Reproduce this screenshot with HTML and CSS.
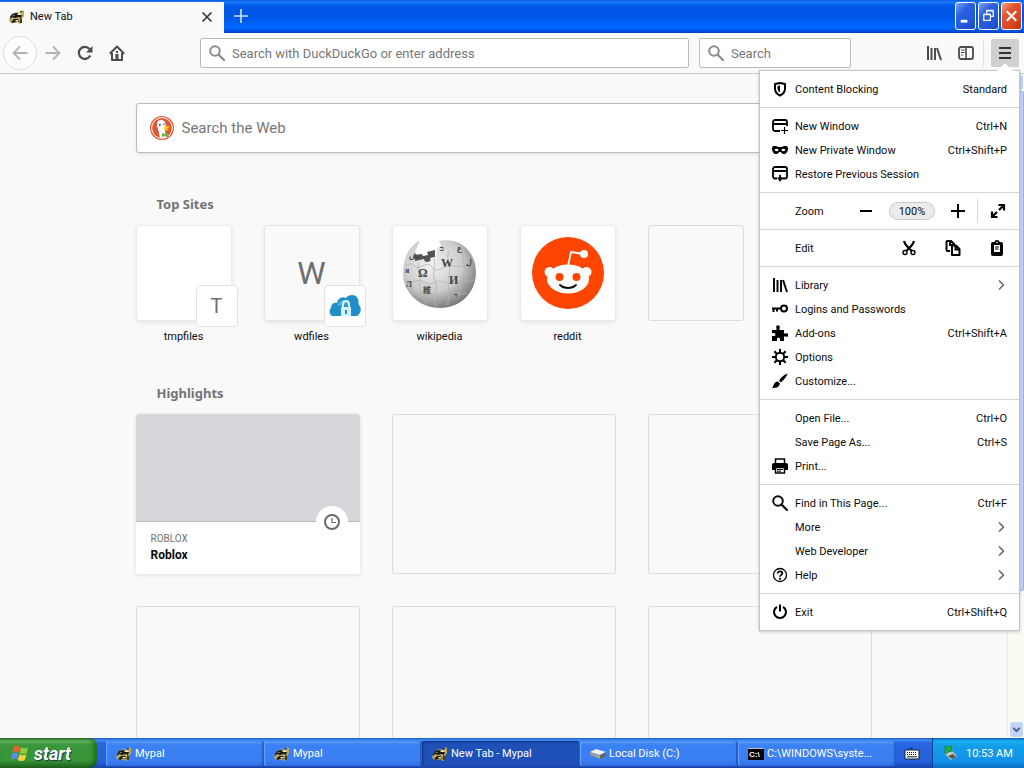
FILE: index.html
```
<!DOCTYPE html>
<html lang="en">
<head>
    <meta charset="UTF-8">
    <meta name="viewport" content="width=device-width, initial-scale=1.0">
    <title>New Tab - Mypal</title>
    <link rel="stylesheet" href="styles.css">
</head>
<body>
    <svg class="sprite" aria-hidden="true">
        <symbol id="mypal" viewBox="0 0 16 16">
            <path d="M1 9l1-3 3-2 3-1 3 1 2-3 2 1 0 5-2 3 0 4-3 1-1-2-3 1-3 0-2-1-1-2z" fill="#b8a95c"/>
            <path d="M1 8l2-3 4-1 3 1 3 1-1 3-2-1-4 1-3-1-2 2zM5 10l4 0 2 3-3-1-4 2-2-1zM11 2l2 0-1 2z" fill="#1c1a12"/>
            <path d="M8 6l2-2 3 1-1 1zM3 7l3-1-1 1zM6 11l3 0 1 1-3 0z" fill="#f5eccb"/>
            <path d="M11 9l2 1 0 4-2 0z" fill="#443d1c"/>
        </symbol>
        <symbol id="chevron" viewBox="0 0 16 16">
            <path d="M8 3.500l4.500 4.500L8 12.500" fill="none" stroke="#666" stroke-width="1.500"/>
        </symbol>
        <symbol id="glass" viewBox="0 0 16 16">
            <circle cx="6" cy="6" r="4.800" fill="none" stroke="currentColor" stroke-width="2"/>
            <path d="M9.500 9.500l5.500 5.500" stroke="currentColor" stroke-width="2.200" stroke-linecap="round"/>
        </symbol>
        <symbol id="library" viewBox="0 0 16 16">
            <path d="M2 1v14M5.500 3v12M9 3v12M11 3l4 12" fill="none" stroke="currentColor" stroke-width="2"/>
        </symbol>
    </svg>

    <header class="titlebar">
        <div class="tab">
            <svg class="icon"><use href="#mypal"/></svg>
            <span class="tab-title">New Tab</span>
            <button class="tab-close" aria-label="Close tab">
                <svg class="icon" viewBox="0 0 16 16"><path d="M3.500 3.500l9 9M12.500 3.500l-9 9" stroke="#333" stroke-width="1.600"/></svg>
            </button>
        </div>
        <button class="new-tab" aria-label="Open a new tab">
            <svg class="icon" viewBox="0 0 16 16"><path d="M8 1v14M1 8h14" stroke="#cfe4ff" stroke-width="1.600"/></svg>
        </button>
        <div class="window-buttons">
            <button class="win-btn" aria-label="Minimize"><svg viewBox="0 0 20 26"><path d="M5 18.500h7" stroke="#fff" stroke-width="3"/></svg></button>
            <button class="win-btn" aria-label="Restore"><svg viewBox="0 0 20 26"><path d="M5 11.500h7v6H5zM5 11h7M8 10V7.500h7v6h-3M8 7h7" fill="none" stroke="#fff" stroke-width="1.300"/></svg></button>
            <button class="win-btn win-close" aria-label="Close"><svg viewBox="0 0 20 26"><path d="M5 8l10 10M15 8L5 18" stroke="#fff" stroke-width="2.200"/></svg></button>
        </div>
    </header>

    <nav class="toolbar">
        <button class="tool back" aria-label="Back">
            <svg class="icon" viewBox="0 0 16 16"><path d="M15.500 8H1.500M8 1.500L1.500 8 8 14.500" fill="none" stroke="#b4b4b4" stroke-width="1.800"/></svg>
        </button>
        <button class="tool" aria-label="Forward">
            <svg class="icon" viewBox="0 0 16 16"><path d="M.5 8h14M8 1.500L14.500 8 8 14.500" fill="none" stroke="#b4b4b4" stroke-width="1.800"/></svg>
        </button>
        <button class="tool" aria-label="Reload">
            <svg class="icon" viewBox="0 0 16 16"><path d="M13.300 10.500A6 6 0 1 1 12.500 4" fill="none" stroke="#4a4a4f" stroke-width="2.200"/><path d="M15.500 1v6.500H9z" fill="#4a4a4f"/></svg>
        </button>
        <button class="tool" aria-label="Home">
            <svg class="icon" viewBox="0 0 16 16"><path d="M.8 8.700L8 1.500l7.200 7.200M3 8v7h10V8" fill="none" stroke="#4a4a4f" stroke-width="2" stroke-linejoin="round"/><path d="M6.500 9h3v6h-3z" fill="#4a4a4f"/><path d="M7 6h2v2H7z" fill="#4a4a4f"/></svg>
        </button>
        <div class="spacer"></div>
        <label class="field url">
            <svg class="icon"><use href="#glass"/></svg>
            <input type="text" aria-label="Address" placeholder="Search with DuckDuckGo or enter address">
        </label>
        <label class="field search">
            <svg class="icon"><use href="#glass"/></svg>
            <input type="text" aria-label="Search" placeholder="Search">
        </label>
        <div class="spacer"></div>
        <button class="tool" aria-label="Library"><svg class="icon"><use href="#library"/></svg></button>
        <button class="tool" aria-label="Sidebars">
            <svg class="icon" viewBox="0 0 16 16"><rect x="1" y="2" width="14" height="12" rx="2" fill="none" stroke="#4a4a4f" stroke-width="1.800"/><path d="M8 2v12" stroke="#4a4a4f" stroke-width="1.600"/><path d="M3 5h3.500M3 7.500h3.500M3 10h2" stroke="#4a4a4f"/></svg>
        </button>
        <div class="menu-holder">
            <button class="tool menu-button" aria-label="Open menu">
                <svg class="icon" viewBox="0 0 16 16"><path d="M2 3h12M2 8h12M2 13h12" stroke="#333" stroke-width="2"/></svg>
            </button>
        </div>
    </nav>

    <div class="viewport">
        <main class="page">
            <label class="web-search">
                <svg class="duck" viewBox="0 0 24 24"><circle cx="12" cy="12" r="12" fill="#de5833"/><circle cx="12" cy="12" r="10.400" fill="none" stroke="#fff"/><path d="M8 5c3-2 7-1 7.500 3l.5 4-1 3 1 6.500c-3 .7-5 .3-6 0L8 13C7 10 6.500 7 8 5z" fill="#fff"/><path d="M14 11c2-1 4-1 6-.5-1 1.500-3 1.200-3 2.500l2 .5c-2 1.500-5 1-5-.5z" fill="#fdd20a"/><path d="M12 17l3 1 3-1v4l-3-1-3 1z" fill="#65bc46"/><circle cx="9.800" cy="8.800" r="1" fill="#2d4f8e"/><circle cx="14" cy="8.300" r=".8" fill="#2d4f8e"/></svg>
                <input type="text" aria-label="Search the Web" placeholder="Search the Web">
            </label>

            <section>
                <h2>Top Sites</h2>
                <div class="sites">
                    <a class="site" href="#">
                        <span class="tile"><span class="badge">T</span></span>
                        <span>tmpfiles</span>
                    </a>
                    <a class="site" href="#">
                        <span class="tile letter">W<span class="badge">
                            <svg class="cloud" viewBox="0 0 32 24"><path d="M3 22c-3-2-3-6-1-8 0-4 3-6 6-5 1-5 5-7 9-5 3-4 10-4 12 1 1 3 0 4 1 6 3 3 2 9-2 11z" fill="#1f8fc9"/><path d="M10 8c4-4 10-1 10 4-4-3-7 0-12 0z" fill="#48b0de"/><path d="M12 13h10v9H12z" fill="#d5f1fa"/><path d="M14 13v-3c0-4 6-4 6 0v3" fill="none" stroke="#d5f1fa" stroke-width="2"/><path d="M17 16v4" stroke="#1f8fc9" stroke-width="2"/></svg>
                        </span></span>
                        <span>wdfiles</span>
                    </a>
                    <a class="site" href="#">
                        <span class="tile">
                            <svg class="wiki" viewBox="0 0 76 72">
                                <defs>
                                    <radialGradient id="globe" cx=".4" cy=".35" r=".68"><stop offset="0" stop-color="#f2f2f2"/><stop offset=".6" stop-color="#ccc"/><stop offset="1" stop-color="#777"/></radialGradient>
                                </defs>
                                <path d="M18 3l-5 13 4 2v4l9 1 8-3 1-8 4-4-2-4C60-1 74 17 74 35c0 21-16 36-36 36S1 56 1 36C1 21 7 9 18 3z" fill="url(#globe)"/>
                                <path d="M12 18l8-1 1 2 5-1-1-3 8-2v7l-5 1c3 4-6 6-6 1l-9 2z" fill="#555"/>
                                <g fill="none" stroke="#b4b4b4" stroke-width=".8"><path d="M4 28c10-4 8 5 14 2s10-4 13 1 10 0 14-2 12 3 26-2M3 44c9 4 12-3 17 0s8 4 13 1 10 2 15 0 13 2 24-2M10 58c8-3 12 2 18 0s10 3 16 0 12 1 21-2"/><path d="M17 26c-3 10 3 9 1 18s2 14 6 23M32 22c3 9-3 12 1 22s-3 14 1 26M47 14c-4 10 3 14 0 24s3 16-2 30M61 12c-2 10 4 18 0 28s0 12-6 22"/></g>
                                <g class="glyphs"><text class="big" x="16" y="40">Ω</text><text class="big" x="39" y="30">W</text><text class="big" x="47" y="47">И</text><text x="21" y="56">維</text><text x="55" y="14">ع</text><text x="38" y="14">כ</text><text x="64" y="28">ل</text><text x="52" y="61">ר</text><text x="3" y="36">я</text><text x="4" y="50">Л</text><text x="7" y="21">ش</text></g>
                            </svg>
                        </span>
                        <span>wikipedia</span>
                    </a>
                    <a class="site" href="#">
                        <span class="tile">
                            <svg class="reddit" viewBox="0 0 72 72"><circle cx="36" cy="36" r="36" fill="#ff4500"/><path d="M36 29l3-14 13 2" fill="none" stroke="#fff" stroke-width="1.800"/><circle cx="52" cy="17" r="4" fill="#fff"/><circle cx="17.500" cy="35" r="5" fill="#fff"/><circle cx="54.500" cy="35" r="5" fill="#fff"/><ellipse cx="36" cy="42" rx="21" ry="14.500" fill="#fff"/><circle cx="27.500" cy="40" r="4" fill="#ff4500"/><circle cx="44.500" cy="40" r="4" fill="#ff4500"/><path d="M28 48c4 4 12 4 16 0" fill="none" stroke="#111" stroke-width="1.800" stroke-linecap="round"/></svg>
                        </span>
                        <span>reddit</span>
                    </a>
                    <div class="site"><span class="tile empty"></span></div>
                    <div class="site"><span class="tile empty"></span></div>
                </div>
            </section>

            <section>
                <h2>Highlights</h2>
                <div class="cards">
                    <a class="card" href="#">
                        <span class="preview"></span>
                        <span class="visited">
                            <svg class="icon" viewBox="0 0 16 16"><circle cx="8" cy="8" r="7" fill="none" stroke="#6a6a6e" stroke-width="2"/><path d="M8 4v4.500h4" fill="none" stroke="#6a6a6e" stroke-width="1.200"/></svg>
                        </span>
                        <span class="host">ROBLOX</span>
                        <strong>Roblox</strong>
                    </a>
                    <div class="card empty"></div>
                    <div class="card empty"></div>
                    <div class="card empty"></div>
                    <div class="card empty"></div>
                    <div class="card empty"></div>
                </div>
            </section>
        </main>
        <div class="scrollbar">
            <button class="scroll-btn" aria-label="Scroll up"><svg viewBox="0 0 16 16"><path d="M4 10l4-4 4 4" fill="none" stroke="#4d6185" stroke-width="2.500"/></svg></button>
            <div class="thumb"></div>
            <div class="track"></div>
            <button class="scroll-btn" aria-label="Scroll down"><svg viewBox="0 0 16 16"><path d="M4 6l4 4 4-4" fill="none" stroke="#4d6185" stroke-width="2.500"/></svg></button>
        </div>
    </div>

    <aside class="menu">
        <button class="item">
            <svg class="icon" viewBox="0 0 16 16"><path d="M8 2l5 1v5c0 3-2 5-5 6.500C5 13 3 11 3 8V3z" fill="none" stroke="#000" stroke-width="2" stroke-linejoin="round"/><path d="M8 4.500v7C6 10 5.500 9 5.500 8V5z"/></svg>
            <span>Content Blocking</span><span class="key">Standard</span>
        </button>
        <hr>
        <button class="item">
            <svg class="icon" viewBox="0 0 16 16"><path d="M8 13H3a2 2 0 0 1-2-2V4a2 2 0 0 1 2-2h10a2 2 0 0 1 2 2v4M1 6h14" fill="none" stroke="#000" stroke-width="1.800"/><path d="M12.500 9v7M9 12.500h7" stroke="#000" stroke-width="1.200"/></svg>
            <span>New Window</span><span class="key">Ctrl+N</span>
        </button>
        <button class="item">
            <svg class="icon" viewBox="0 0 16 16"><path fill-rule="evenodd" d="M0 6c0-2 3-2.500 5-1.500 2 .8 4 .8 6 0 2-1 5-.5 5 1.500 0 4-2 6-4 6-2.500 0-2.500-2-4-2s-1.500 2-4 2c-2 0-4-2-4-6zM2.500 8c1.500 1.700 3 1.500 4.200 0-1.200-1.700-3-1.700-4.200 0zM9.300 8c1.200 1.500 2.700 1.700 4.200 0-1.200-1.700-3-1.700-4.200 0z"/></svg>
            <span>New Private Window</span><span class="key">Ctrl+Shift+P</span>
        </button>
        <button class="item">
            <svg class="icon" viewBox="0 0 16 16"><path d="M5 12.500H3a2 2 0 0 1-2-2V3a2 2 0 0 1 2-2h10a2 2 0 0 1 2 2v7.500a2 2 0 0 1-2 2H8.500M1 5h14" fill="none" stroke="#000" stroke-width="1.800"/><path d="M8 9v3" stroke="#000" stroke-width="1.800"/><path d="M5 11.500h5.500L8 16z"/></svg>
            <span>Restore Previous Session</span>
        </button>
        <hr>
        <div class="item controls">
            <span>Zoom</span>
            <button aria-label="Zoom out"><svg class="icon" viewBox="0 0 16 16"><path d="M2 8h12" stroke="#000" stroke-width="2"/></svg></button>
            <button class="percent">100%</button>
            <button aria-label="Zoom in"><svg class="icon" viewBox="0 0 16 16"><path d="M8 1v14M1 8h14" stroke="#000" stroke-width="2"/></svg></button>
            <button class="fullscreen" aria-label="Full screen"><svg class="icon" viewBox="0 0 16 16"><path d="M2 14l5-5M9 7l5-5M8.500 2H14v5.500M2 8.500V14h5.500" fill="none" stroke="#000" stroke-width="2.200"/></svg></button>
        </div>
        <hr>
        <div class="item controls edit">
            <span>Edit</span>
            <button aria-label="Cut"><svg class="icon" viewBox="0 0 16 16"><path d="M3 1c1 4 3 6 8 10M13 1c-1 4-3 6-8 10" fill="none" stroke="#000" stroke-width="2.200"/><circle cx="4" cy="12.500" r="2" fill="none" stroke="#000" stroke-width="1.400"/><circle cx="12" cy="12.500" r="2" fill="none" stroke="#000" stroke-width="1.400"/></svg></button>
            <button aria-label="Copy"><svg class="icon" viewBox="0 0 16 16"><path d="M5 11H2.500A1 1 0 0 1 1.500 10V2a1 1 0 0 1 1-1H6l3 3v1M5 1v4h3" fill="none" stroke="#000" stroke-width="2"/><path d="M7 5.500h4l3.500 3.500v6H7zM10.500 6v3.500h4" fill="#fff" stroke="#000" stroke-width="2" stroke-linejoin="round"/></svg></button>
            <button aria-label="Paste"><svg class="icon" viewBox="0 0 16 16"><path d="M4 2h1.500a2.500 2 0 0 1 5 0H12a2 2 0 0 1 2 2v10a2 2 0 0 1-2 2H4a2 2 0 0 1-2-2V4a2 2 0 0 1 2-2z"/><path d="M5 5h6v7H5z" fill="#fff"/><path d="M6 7h4M6 9h3.500" stroke="#000"/><circle cx="8" cy="2.200" r=".8" fill="#fff"/></svg></button>
        </div>
        <hr>
        <button class="item">
            <svg class="icon"><use href="#library"/></svg>
            <span>Library</span><svg class="icon more"><use href="#chevron"/></svg>
        </button>
        <button class="item">
            <svg class="icon" viewBox="0 0 16 16"><circle cx="12" cy="7.500" r="3" fill="none" stroke="#000" stroke-width="2"/><path d="M9 7.500H0M1.500 7v4M5 7v3.500" fill="none" stroke="#000" stroke-width="2"/></svg>
            <span>Logins and Passwords</span>
        </button>
        <button class="item">
            <svg class="icon" viewBox="0 0 16 16"><path d="M0 5h4.500V3a1.800 1.800 0 1 1 3 0v2H12v3.500h2a1.700 1.700 0 1 1 0 3h-2V16H8v-2a1.500 1.500 0 0 0-3 0v2H0v-5h2a1.500 1.500 0 0 0 0-3H0z"/></svg>
            <span>Add-ons</span><span class="key">Ctrl+Shift+A</span>
        </button>
        <button class="item">
            <svg class="icon" viewBox="0 0 16 16"><circle cx="8" cy="8" r="4.200" fill="none" stroke="#000" stroke-width="1.900"/><path d="M8 0v3.500M8 12.500V16M0 8h3.500M12.500 8H16M2.300 2.300l2.500 2.500M11.200 11.200l2.500 2.500M13.700 2.300l-2.500 2.500M4.800 11.200l-2.500 2.500" stroke="#000" stroke-width="2"/></svg>
            <span>Options</span>
        </button>
        <button class="item">
            <svg class="icon" viewBox="0 0 16 16"><path d="M15.500.5c-3 1-6 3.500-8.500 7l2 2c3-3 6-6 6.500-9zM6 8.500L8 10.500c-1 4-4 4.500-8 4.500 2-1.500 1-6 6-6.500z"/></svg>
            <span>Customize...</span>
        </button>
        <hr>
        <button class="item indent"><span>Open File...</span><span class="key">Ctrl+O</span></button>
        <button class="item indent"><span>Save Page As...</span><span class="key">Ctrl+S</span></button>
        <button class="item">
            <svg class="icon" viewBox="0 0 16 16"><path d="M3.500 5V1h9v4" fill="#fff" stroke="#000" stroke-width="1.500"/><path d="M2 5h12a2 2 0 0 1 2 2v5H0V7a2 2 0 0 1 2-2z"/><path d="M3.500 9.500h9v5.500h-9z" fill="#fff" stroke="#000" stroke-width="1.500"/><path d="M5 11.500h6M5 13.200h4" stroke="#000"/></svg>
            <span>Print...</span>
        </button>
        <hr>
        <button class="item">
            <svg class="icon"><use href="#glass"/></svg>
            <span>Find in This Page...</span><span class="key">Ctrl+F</span>
        </button>
        <button class="item indent"><span>More</span><svg class="icon more"><use href="#chevron"/></svg></button>
        <button class="item indent"><span>Web Developer</span><svg class="icon more"><use href="#chevron"/></svg></button>
        <button class="item">
            <svg class="icon" viewBox="0 0 16 16"><circle cx="8" cy="8" r="6.500" fill="none" stroke="#000" stroke-width="1.300"/><path d="M5.700 6.500c0-3 4.600-2.700 4.600-.2 0 1.700-2.200 1.500-2.200 3.400" fill="none" stroke="#000" stroke-width="1.800"/><circle cx="8" cy="11.800" r="1.100"/></svg>
            <span>Help</span><svg class="icon more"><use href="#chevron"/></svg>
        </button>
        <hr>
        <button class="item">
            <svg class="icon" viewBox="0 0 16 16"><path d="M5 2.800a6 6 0 1 0 6 0M8 .5v7" fill="none" stroke="#000" stroke-width="2"/></svg>
            <span>Exit</span><span class="key">Ctrl+Shift+Q</span>
        </button>
    </aside>

    <footer class="taskbar">
        <button class="start">
            <svg class="flag" viewBox="0 0 20 20"><path d="M3 3c2-1.500 4-1.500 6.500 0L8 9C6 7.500 4 7.500 1.500 9z" fill="#f0602c"/><path d="M10.500 3.500c2 1.300 5 1.500 7.500 0l-1.500 6c-2 1.300-5 1.300-7.500 0z" fill="#8ccb3c"/><path d="M1.200 10.200c2-1.500 4.500-1.500 6.500 0L6 16.500c-2-1.500-4-1.500-6.300 0z" fill="#5b8df5"/><path d="M8.800 10.800c2 1.300 5 1.300 7.300 0l-1.600 6c-2 1.500-5 1.500-7.300 0z" fill="#fbcf3b"/></svg>
            <span>start</span>
        </button>
        <div class="tasks">
            <button class="task"><svg class="icon"><use href="#mypal"/></svg><span>Mypal</span></button>
            <button class="task"><svg class="icon"><use href="#mypal"/></svg><span>Mypal</span></button>
            <button class="task active"><svg class="icon"><use href="#mypal"/></svg><span>New Tab - Mypal</span></button>
            <button class="task">
                <svg class="icon" viewBox="0 0 16 16"><path d="M0 6l6-3 10 3-6 3z" fill="#f2f2f2"/><path d="M0 6l10 3v4L0 9z" fill="#9a9a9a"/><path d="M10 9l6-3v4l-6 3z" fill="#666"/><path d="M7 10l2 1" stroke="#6f6"/></svg>
                <span>Local Disk (C:)</span>
            </button>
            <button class="task">
                <svg class="icon" viewBox="0 0 16 16"><path d="M0 3h16v11H0z"/><path d="M0 2.500h16" stroke="#bbb"/><text class="prompt" x="1" y="11">C:\</text></svg>
                <span>C:\WINDOWS\syste...</span>
            </button>
        </div>
        <button class="keyboard" aria-label="Keyboard">
            <svg class="icon" viewBox="0 0 16 16"><path d="M5 5c0-3 3 0 3-3" fill="none" stroke="#123"/><path d="M1 5h14v9H1z" fill="#fff" stroke="#123"/><path d="M3 7.500h10M3 9.500h10" stroke="#111" stroke-dasharray="1 1"/><path d="M3 11.800h10" stroke="#111"/></svg>
        </button>
        <div class="tray">
            <svg class="icon" viewBox="0 0 16 16"><path d="M2 9l7-3 5 5-6 4z" fill="#c8c8b4"/><path d="M5 11l5-2 3 3-4 2z" fill="#555"/><path d="M1 2l7-1v6L6 5.500 3 9 1 7l2.500-3z" fill="#36b336" stroke="#0c6e1c" stroke-width=".6"/></svg>
            <time>10:53 AM</time>
        </div>
    </footer>
</body>
</html>
```
FILE: styles.css
```
* {
    box-sizing: border-box;
}
body {
    display: flex;
    flex-direction: column;
    height: 100vh;
    margin: 0;
    overflow: hidden;
    position: relative;
    background-color: #f9f9fa;
    color: #0c0c0d;
    font-family: Roboto, "Noto Sans", sans-serif;
    font-size: 11px;
}
button, input {
    font: inherit;
    color: inherit;
    border: none;
    background: none;
    padding: 0;
    margin: 0;
}
a {
    color: inherit;
    text-decoration: none;
}
.sprite {
    display: none;
}
.icon {
    width: 16px;
    height: 16px;
    flex: none;
    display: block;
}

/* title bar */
.titlebar {
    display: flex;
    height: 33px;
    flex: none;
    padding-top: 2px;
    background: linear-gradient(#0a5be0, #1a78fa 2px, #0058e6 6px, #0056e8 18px, #0066ff 26px, #0060f8 29px, #003fc4 33px);
}
.tab {
    display: flex;
    align-items: center;
    gap: 5px;
    width: 224px;
    padding: 0 9px 2px;
    background-color: #f9f9fa;
}
.tab-title {
    flex: 1;
}
.new-tab {
    width: 33px;
    padding: 0 9px 4px;
}
.window-buttons {
    display: flex;
    gap: 2px;
    margin-left: auto;
    padding-right: 2px;
}
.win-btn {
    width: 21px;
    height: 28px;
    border: 1px solid #fff;
    border-radius: 3px;
    background: linear-gradient(135deg, #7ba2f0, #2c5fe0 35%, #2358dc 70%, #1a46c0);
}
.win-btn svg {
    display: block;
    width: 100%;
    height: 100%;
}
.win-close {
    background: linear-gradient(135deg, #f0a088, #e0532d 35%, #d9481f 70%, #b8300c);
}

/* toolbar */
.toolbar {
    display: flex;
    align-items: center;
    flex: none;
    height: 41px;
    padding: 0 5px 0 3px;
    background-color: #f9f9fa;
    border-bottom: 1px solid #ccc;
    color: #4a4a4f;
}
.tool {
    display: flex;
    align-items: center;
    justify-content: center;
    width: 32px;
    height: 28px;
}
.back {
    width: 34px;
    height: 34px;
    border: 1px solid #dededf;
    border-radius: 50%;
    background-color: #fdfdfd;
}
.spacer {
    flex: 0 1 67px;
}
.field {
    display: flex;
    align-items: center;
    gap: 7px;
    height: 30px;
    padding: 0 8px;
    border: 1px solid #bbb;
    border-radius: 2px;
    background-color: #fff;
    color: #8c8c8e;
}
.field input {
    flex: 1;
    min-width: 0;
    font-size: 13px;
}
.field input::placeholder, .web-search input::placeholder {
    color: #777;
    opacity: 1;
}
.url {
    flex: 1;
    margin-right: 10px;
}
.search {
    width: 152px;
}
.menu-holder {
    padding-left: 7px;
    margin-left: 1px;
    border-left: 1px solid #e4e4e5;
}
.menu-button {
    width: 28px;
    border-radius: 2px;
    background-color: #d0d0d0;
}

/* new tab page */
.viewport {
    display: flex;
    flex: 1;
    min-height: 0;
}
.page {
    flex: 1;
    overflow: hidden;
    padding-top: 29px;
}
.page > * {
    width: 736px;
    margin: 0 auto;
}
.web-search {
    display: flex;
    align-items: center;
    gap: 8px;
    height: 50px;
    padding: 0 13px;
    border: 1px solid #bbb;
    border-radius: 3px;
    background-color: #fff;
    box-shadow: 0 1px 3px rgba(0,0,0,0.1);
}
.web-search input {
    flex: 1;
    font-size: 15px;
}
.duck {
    width: 24px;
    height: 24px;
}
h2 {
    margin: 0;
    padding-left: 21px;
    color: #737373;
    font-family: "Noto Sans", sans-serif;
    font-size: 13px;
    line-height: 20px;
}
section h2 {
    padding-top: 41px;
    padding-bottom: 11px;
}
section + section h2 {
    padding-top: 38px;
}
.sites {
    display: flex;
    gap: 32px;
}
.site {
    display: flex;
    flex-direction: column;
    align-items: center;
    gap: 8px;
    width: 96px;
    line-height: 16px;
}
.tile {
    position: relative;
    display: flex;
    align-items: center;
    justify-content: center;
    width: 96px;
    height: 96px;
    border-radius: 4px;
    background-color: #fff;
    box-shadow: inset 0 0 0 1px rgba(0,0,0,0.08), 0 1px 4px rgba(0,0,0,0.1);
}
.letter {
    background-color: #f9f9fa;
    color: #6f6f70;
    font-size: 32px;
}
.empty {
    background: none;
    box-shadow: inset 0 0 0 1px #dcdcdd;
}
.badge {
    position: absolute;
    right: -6px;
    bottom: -6px;
    display: flex;
    align-items: center;
    justify-content: center;
    width: 42px;
    height: 42px;
    border: 1px solid #e2e2e3;
    border-radius: 4px;
    background-color: #fff;
    color: #6f6f70;
    font-size: 20px;
}
.cloud {
    width: 32px;
    height: 24px;
}
.wiki {
    width: 76px;
    height: 72px;
}
.glyphs {
    fill: #444;
    font-family: "Liberation Serif", "Noto Sans CJK JP", serif;
    font-size: 8px;
    font-weight: bold;
}
.glyphs .big {
    font-size: 12px;
}
.reddit {
    width: 72px;
    height: 72px;
}
.cards {
    display: grid;
    grid-template-columns: repeat(3, 1fr);
    gap: 32px;
}
.card {
    position: relative;
    display: flex;
    flex-direction: column;
    height: 160px;
    border-radius: 3px;
    line-height: 16px;
}
.card:not(.empty) {
    background-color: #fff;
    box-shadow: 0 1px 4px rgba(0,0,0,0.12);
}
.preview {
    height: 108px;
    margin-bottom: 9px;
    border-bottom: 1px solid #bbb;
    border-radius: 3px 3px 0 0;
    background-color: #d7d7db;
}
.visited {
    position: absolute;
    top: 92px;
    right: 12px;
    padding: 8px;
    border-radius: 50%;
    background-color: #fff;
}
.host, .card strong {
    padding: 0 15px;
}
.host {
    color: #737373;
    font-size: 10px;
}
.card strong {
    font-size: 12px;
}
.scrollbar {
    display: flex;
    flex-direction: column;
    width: 17px;
    padding-left: 1px;
    background-color: #fbfbf4;
    border-left: 1px solid #eeede5;
}
.scroll-btn {
    height: 17px;
    border: 1px solid #fff;
    border-radius: 3px;
    background-color: #c5d4fb;
}
.scroll-btn svg {
    display: block;
    width: 100%;
}
.thumb {
    flex: 500;
    border: 1px solid #98b0e8;
    border-radius: 2px;
    background-color: #c5d4fb;
}
.track {
    flex: 131;
}

/* application menu */
.menu {
    position: absolute;
    top: 70px;
    right: 4px;
    width: 261px;
    padding: 6px 0;
    border: 1px solid #c4c4c4;
    background-color: #fff;
    box-shadow: 0 1px 3px rgba(0,0,0,0.2);
}
.menu::before {
    content: "";
    position: absolute;
    top: -8px;
    right: 6px;
    border: 8px solid transparent;
    border-top: none;
    border-bottom-color: #fff;
}
.menu hr {
    height: 1px;
    margin: 6px 0;
    border: none;
    background-color: #d7d7db;
}
.item {
    display: flex;
    align-items: center;
    gap: 7px;
    width: 100%;
    height: 24px;
    padding: 0 12px;
    text-align: left;
}
.indent, .controls {
    padding-left: 35px;
}
.key, .more {
    margin-left: auto;
}
.controls {
    gap: 0;
}
.controls span {
    flex: 1;
}
.controls button {
    display: flex;
    align-items: center;
    justify-content: center;
    width: 38px;
}
.controls .percent {
    width: 46px;
    height: 18px;
    margin: 0 4px;
    border: 1px solid #c8c8c8;
    border-radius: 9px;
    background-color: #ebebeb;
}
.controls .fullscreen {
    width: 30px;
    height: 24px;
    padding-left: 10px;
    border-left: 1px solid #d7d7db;
}
.edit {
    padding-right: 0;
}
.controls.edit button {
    width: 44px;
}

/* taskbar */
.taskbar {
    display: flex;
    flex: none;
    height: 30px;
    background: linear-gradient(#1f56c4, #3f8cf3 2px, #2a66e0 5px, #245edb 24px, #1941a5);
    color: #fff;
}
.start {
    display: flex;
    align-items: center;
    gap: 4px;
    width: 97px;
    padding-left: 11px;
    border-radius: 0 8px 8px 0;
    background: linear-gradient(#2f7a2f, #5fb55f 3px, #3c963c 7px, #379637 22px, #226622);
    box-shadow: inset -3px 0 4px rgba(0,60,0,0.5);
    font-size: 18px;
    font-weight: bold;
    font-style: italic;
    text-shadow: 1px 1px 1px #234;
}
.flag {
    width: 19px;
    height: 19px;
}
.tasks {
    display: flex;
    flex: 1;
    gap: 1px;
    padding: 3px 0 2px 9px;
}
.task {
    display: flex;
    flex: 1;
    align-items: center;
    gap: 3px;
    padding-left: 10px;
    border-radius: 2px;
    background: linear-gradient(#5b9bfa, #3c81f3 4px, #3a7ef2 20px, #2f6ce0);
    box-shadow: inset 1px 0 1px #6ba4ff, inset -1px 0 1px #2458c8;
    white-space: nowrap;
}
.active {
    background: #1e50b8;
    box-shadow: inset 1px 1px 2px #0f2f7c;
}
.prompt {
    fill: #fff;
    font-family: "Liberation Sans", sans-serif;
    font-size: 8px;
    font-weight: bold;
}
.keyboard {
    width: 37px;
    padding-left: 9px;
}
.tray {
    display: flex;
    align-items: center;
    gap: 7px;
    width: 92px;
    padding-left: 10px;
    border-left: 1px solid #0d3f93;
    background: linear-gradient(#0c59b9, #19b0f2 3px, #139ee9 8px, #1290e8 24px, #0b6bc0);
}
```
